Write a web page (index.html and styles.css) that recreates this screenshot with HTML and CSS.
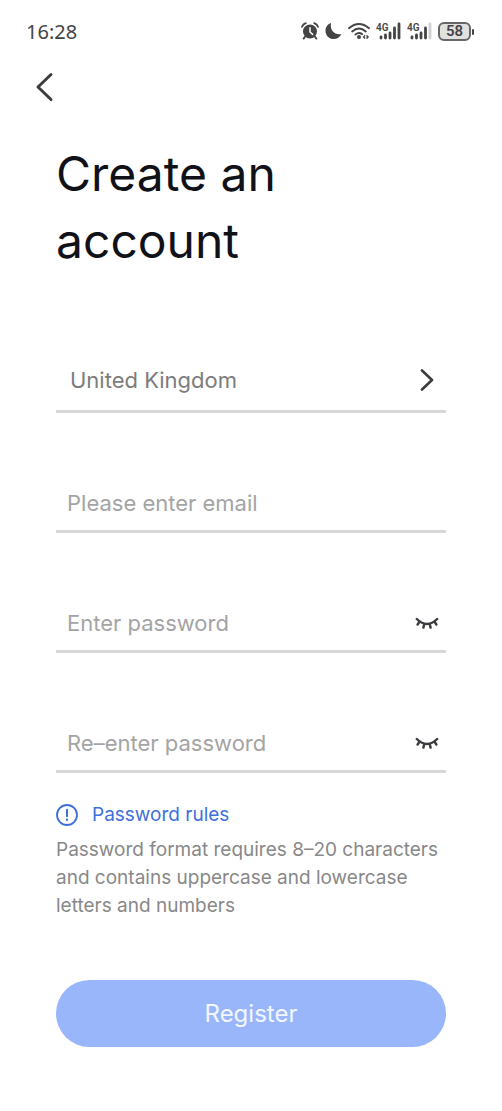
FILE: index.html
```html
<!DOCTYPE html>
<html lang="en">
<head>
<meta charset="utf-8">
<meta name="viewport" content="width=device-width, initial-scale=1">
<title>Create an account</title>
<link rel="stylesheet" href="styles.css">
</head>
<body>
<header class="status-bar">
  <time class="clock">16:28</time>
  <div class="indicators">
    <svg class="alarm" width="18" height="18" viewBox="0 0 18 18" aria-hidden="true">
      <circle cx="9" cy="9.500" r="7" fill="#444"/>
      <path d="M1 4.800Q2 2.200 4.800 1.200M17 4.800Q16 2.200 13.200 1.200M4.200 14.500L2.600 16.600M13.800 14.500L15.400 16.600" fill="none" stroke="#444" stroke-width="1.800" stroke-linecap="round"/>
      <path d="M9 5.800V10L11.600 12.400" fill="none" stroke="#fff" stroke-width="1.500" stroke-linecap="round"/>
    </svg>
    <svg class="moon" width="17" height="18" viewBox="0 0 17 18" aria-hidden="true">
      <path d="M6 1C2.800 2 .5 5 .5 8.700.5 13.400 4.200 17 8.700 17c3.300 0 6.400-2 7.800-5C10.500 13.400 4.500 9 6 1Z" fill="#444"/>
    </svg>
    <svg class="wifi" width="22" height="18" viewBox="0 0 22 18" aria-hidden="true">
      <path d="M1 6.200Q11-2.200 21 6.200M4.200 9.400Q11 3.800 17.800 9.400M7.400 12.400Q11 9.600 14.200 12.200" fill="none" stroke="#444" stroke-width="1.900" stroke-linecap="round"/>
      <circle cx="11" cy="15" r="2" fill="#444"/>
      <path d="M16.800 13L14.800 15L16.800 17ZM18.800 13L20.800 15L18.800 17Z" fill="#444" stroke="#444" stroke-width=".5"/>
    </svg>
    <svg class="signal" width="25" height="18" viewBox="0 0 25 18" role="img">
      <text class="network" x="0" y="9">4G</text>
      <path d="M5 15V16M9.500 13V16M14 11V16M18.500 6V16M23 2V16" fill="none" stroke="#444" stroke-width="2.800" stroke-linecap="round"/>
    </svg>
    <svg class="signal" width="25" height="18" viewBox="0 0 25 18" role="img">
      <text class="network" x="0" y="9">4G</text>
      <path d="M5 15V16M9.500 13V16M14 11V16M18.500 6V16" fill="none" stroke="#444" stroke-width="2.800" stroke-linecap="round"/>
      <path d="M23 2V16" stroke="#d0d0d0" stroke-width="2.800" stroke-linecap="round"/>
    </svg>
    <div class="battery"><span class="charge">58</span><span class="terminal"></span></div>
  </div>
</header>
<nav class="toolbar">
  <button class="back" type="button" aria-label="Back">
    <svg width="20" height="30" viewBox="0 0 20 30" aria-hidden="true"><path d="M16 2.500L3 15L16 27.500" fill="none" stroke="#3c3c40" stroke-width="3" stroke-linecap="round" stroke-linejoin="round"/></svg>
  </button>
</nav>
<main class="page">
  <h1 class="title">Create an account</h1>
  <form class="form">
    <button class="field country" type="button">
      <span>United Kingdom</span>
      <svg width="14" height="22" viewBox="0 0 14 22" aria-hidden="true"><path d="M2 1.500L12 11L2 20.500" fill="none" stroke="#3c3c40" stroke-width="2.600" stroke-linecap="round" stroke-linejoin="round"/></svg>
    </button>
    <div class="field">
      <input class="entry" type="email" placeholder="Please enter email" aria-label="Email">
    </div>
    <div class="field">
      <input class="entry" type="password" placeholder="Enter password" aria-label="Password">
      <button class="reveal" type="button" aria-label="Show password">
        <svg width="24" height="14" viewBox="0 0 24 14" aria-hidden="true"><path d="M1.800 3Q12 13 22.200 3M4.500 5.800L2.600 8.500M19.500 5.800L21.400 8.500M9.300 8L8.400 11.600M14.700 8L15.600 11.600" fill="none" stroke="#3c3c40" stroke-width="2.400" stroke-linecap="round"/></svg>
      </button>
    </div>
    <div class="field">
      <input class="entry" type="password" placeholder="Re–enter password" aria-label="Re-enter password">
      <button class="reveal" type="button" aria-label="Show password">
        <svg width="24" height="14" viewBox="0 0 24 14" aria-hidden="true"><path d="M1.800 3Q12 13 22.200 3M4.500 5.800L2.600 8.500M19.500 5.800L21.400 8.500M9.300 8L8.400 11.600M14.700 8L15.600 11.600" fill="none" stroke="#3c3c40" stroke-width="2.400" stroke-linecap="round"/></svg>
      </button>
    </div>
    <section class="rules">
      <h2 class="rules-title">
        <svg width="22" height="22" viewBox="1 1 22 22" aria-hidden="true"><circle cx="12" cy="12" r="10" fill="none" stroke="#3e70dc" stroke-width="1.800"/><path d="M12 6.800V13.200" stroke="#3e70dc" stroke-width="2" stroke-linecap="round"/><circle cx="12" cy="16.800" r="1.200" fill="#3e70dc"/></svg>
        Password rules
      </h2>
      <p class="rules-text">Password format requires 8–20 characters and contains uppercase and lowercase letters and numbers</p>
    </section>
    <button class="register" type="submit">Register</button>
  </form>
</main>
</body>
</html>
```
FILE: styles.css
```css
* {
  box-sizing: border-box;
}

body {
  margin: 0;
  background: #fff;
  color: #444;
  font-family: Inter, "Noto Sans", sans-serif;
}

button,
input {
  margin: 0;
  padding: 0;
  border: 0;
  background: none;
  color: inherit;
  font: inherit;
}

svg {
  display: block;
  flex: none;
}

.status-bar {
  display: flex;
  align-items: center;
  justify-content: space-between;
  height: 62px;
  padding: 0 31px 0 26px;
}

.clock {
  font-family: "Noto Sans", sans-serif;
  font-size: 20px;
}

.indicators {
  display: flex;
  align-items: center;
  gap: 6px;
}

.network {
  fill: #444;
  font: 600 10px Roboto, sans-serif;
}

.battery {
  position: relative;
  width: 33px;
  height: 19px;
  border: 2px solid #666;
  border-radius: 6px;
  background: #e0e0e0;
}

.charge {
  display: block;
  font: 600 15px/15px Roboto, sans-serif;
  text-align: center;
}

.terminal {
  position: absolute;
  top: 5px;
  right: -5px;
  width: 2px;
  height: 6px;
  border-radius: 1px;
  background: #444;
}

.toolbar {
  display: flex;
  height: 50px;
  padding: 0 35px;
}

.back {
  display: flex;
  align-items: center;
  height: 50px;
}

.page {
  padding: 28px 56px 64px;
}

.title {
  max-width: 300px;
  margin: 0 0 75px;
  color: #111118;
  font-size: 48px;
  font-weight: 400;
  line-height: 67px;
}

.form {
  display: flex;
  flex-direction: column;
  gap: 56px;
}

.field {
  display: flex;
  align-items: center;
  gap: 12px;
  height: 64px;
  padding: 6px 7px 0 11px;
  border-bottom: 3px solid #d8d8d8;
  font-size: 22px;
  font-weight: 400;
}

.country {
  justify-content: space-between;
  padding: 0 12px 0 14px;
  color: #7c7c7c;
}

.entry {
  flex: 1;
  min-width: 0;
  height: 48px;
  outline: none;
}

.entry::placeholder {
  color: #a4a4a4;
  opacity: 1;
}

.reveal {
  display: flex;
  align-items: center;
  height: 48px;
}

.rules {
  margin-top: -27px;
}

.rules-title {
  display: flex;
  align-items: center;
  gap: 14px;
  margin: 0 0 8px;
  color: #3e70dc;
  font-size: 19px;
  font-weight: 400;
  line-height: 26px;
}

.rules-text {
  margin: 0;
  color: #888;
  font-size: 19px;
  font-weight: 400;
  line-height: 28px;
}

.register {
  height: 67px;
  margin-top: 4px;
  border-radius: 34px;
  background: #9ab6fb;
  color: #f2f7ff;
  font-size: 24px;
  font-weight: 400;
}
```
